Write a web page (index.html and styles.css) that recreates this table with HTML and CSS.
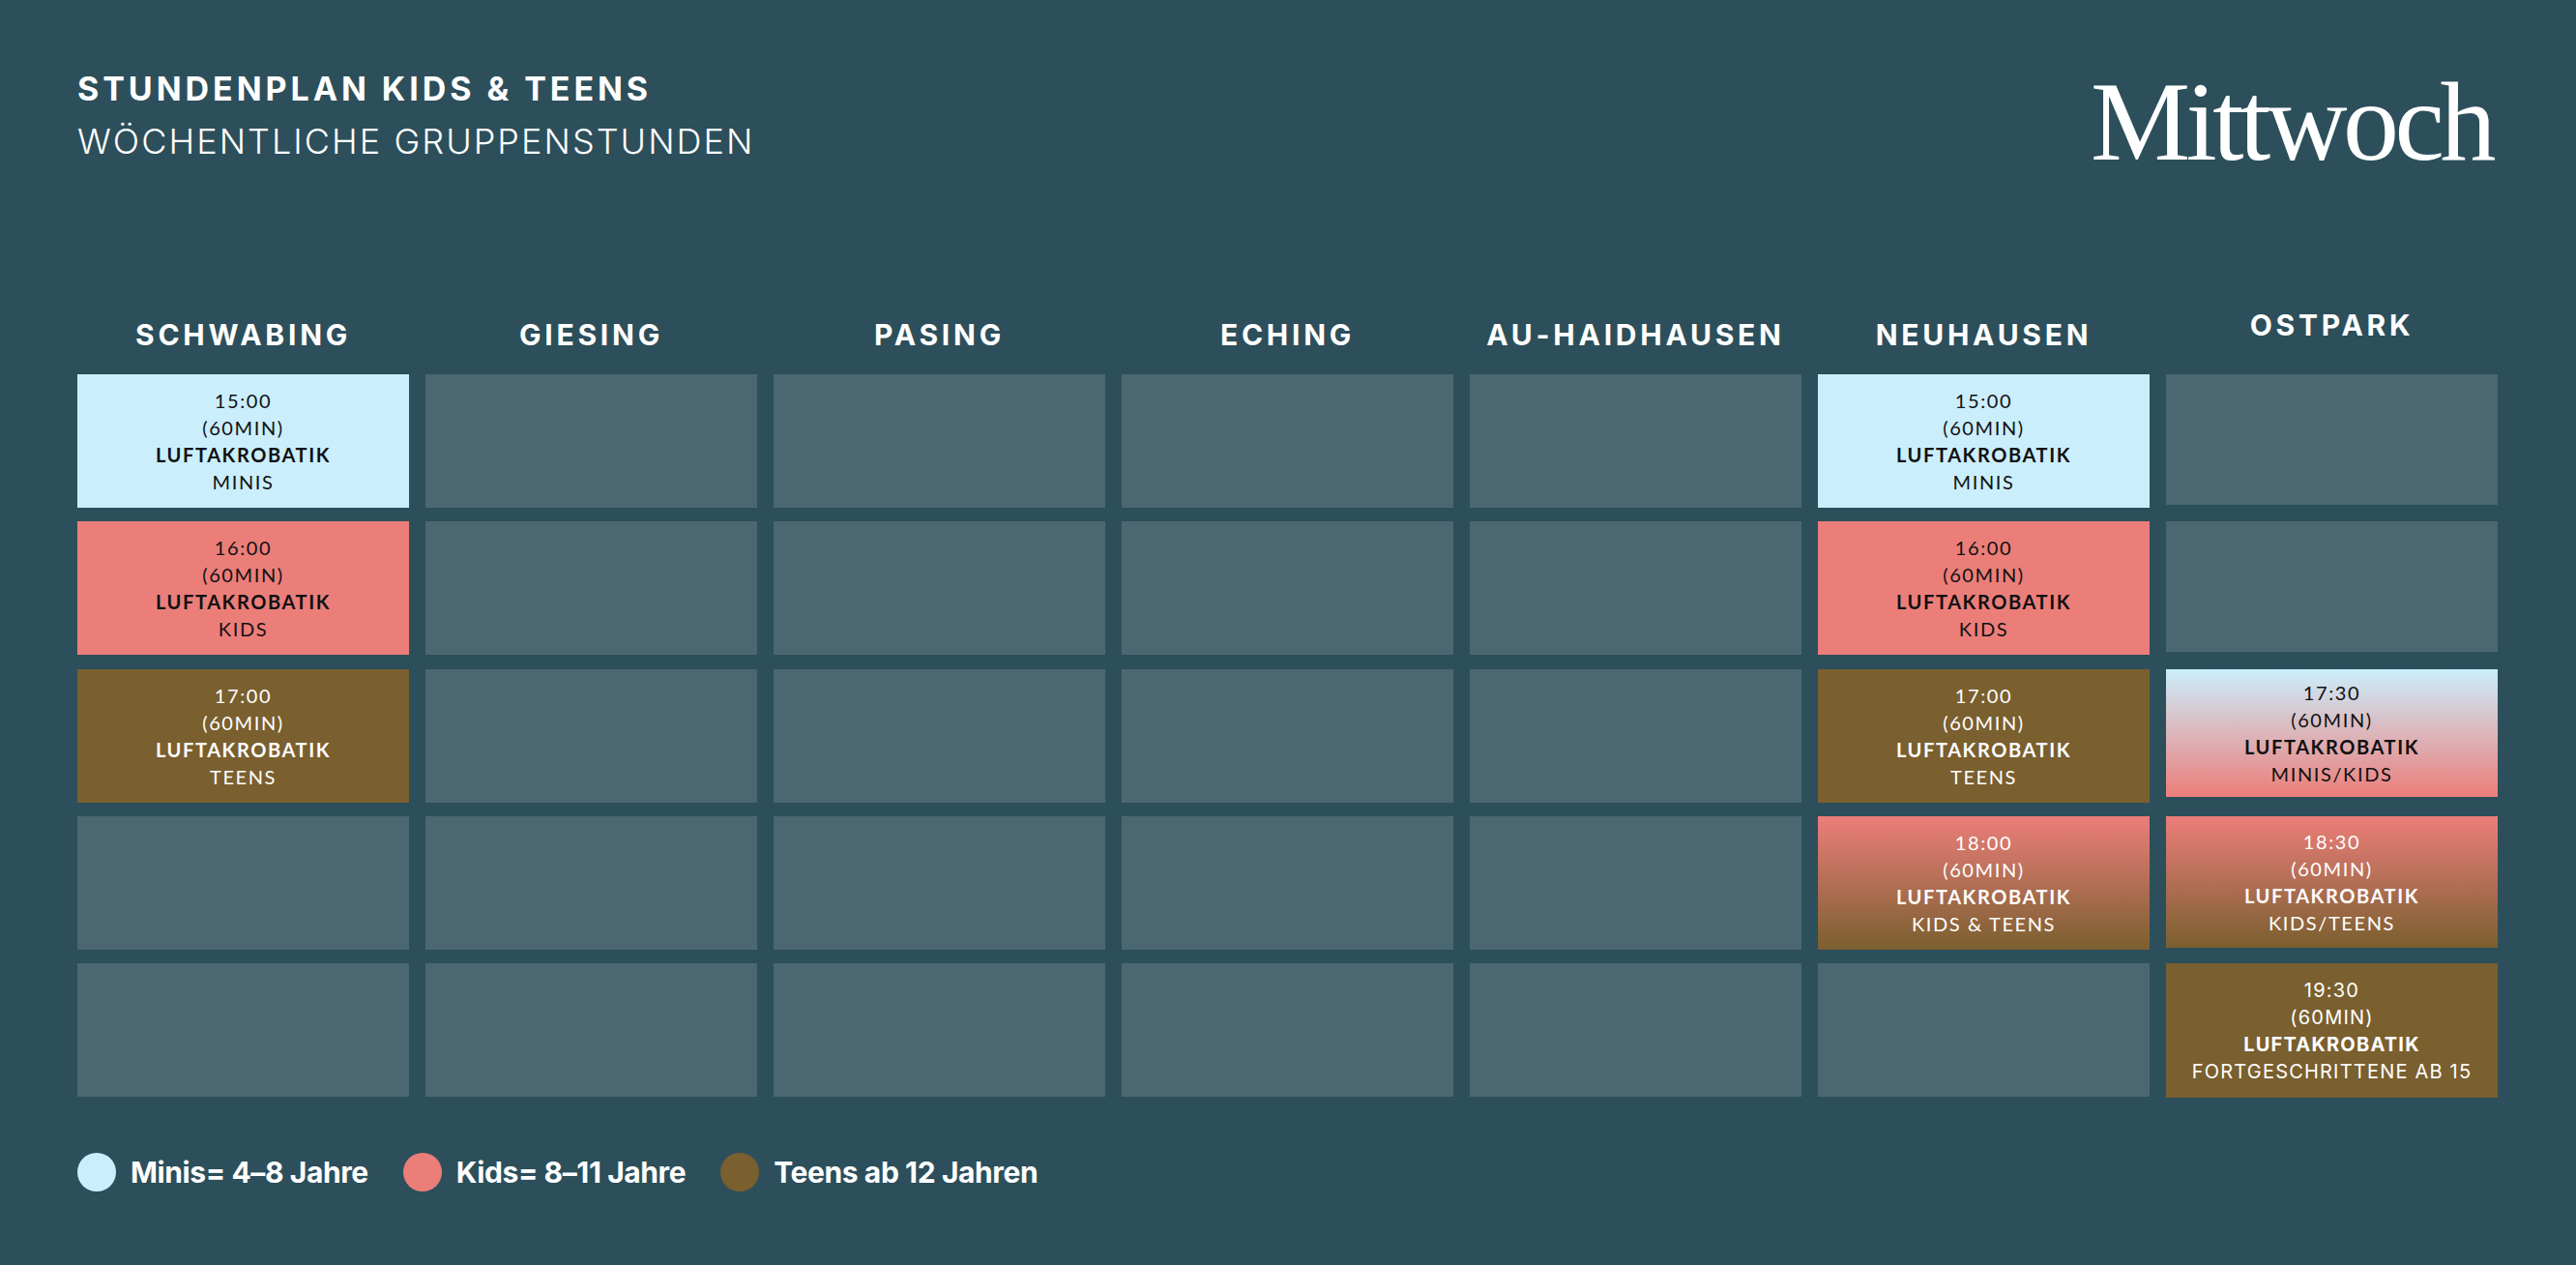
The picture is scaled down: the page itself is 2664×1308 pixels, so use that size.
FILE: index.html
```html
<!DOCTYPE html>
<html lang="de">
<head>
<meta charset="utf-8">
<title>Stundenplan Kids &amp; Teens – Mittwoch</title>
<link rel="stylesheet" href="styles.css">
</head>
<body>
<div class="page">
  <header class="top">
    <div class="titles">
      <h1 class="title">STUNDENPLAN KIDS &amp; TEENS</h1>
      <h2 class="subtitle">WÖCHENTLICHE GRUPPENSTUNDEN</h2>
    </div>
    <div class="logo">Mittwoch</div>
  </header>

  <main class="schedule">
    <section class="col">
      <h3 class="loc">SCHWABING</h3>
      <div class="cells">
        <div class="cell minis"><span>15:00</span><span>(60MIN)</span><b>LUFTAKROBATIK</b><span>MINIS</span></div>
        <div class="cell kids"><span>16:00</span><span>(60MIN)</span><b>LUFTAKROBATIK</b><span>KIDS</span></div>
        <div class="cell teens"><span>17:00</span><span>(60MIN)</span><b>LUFTAKROBATIK</b><span>TEENS</span></div>
        <div class="cell"></div>
        <div class="cell"></div>
      </div>
    </section>
    <section class="col">
      <h3 class="loc">GIESING</h3>
      <div class="cells">
        <div class="cell"></div><div class="cell"></div><div class="cell"></div><div class="cell"></div><div class="cell"></div>
      </div>
    </section>
    <section class="col">
      <h3 class="loc">PASING</h3>
      <div class="cells">
        <div class="cell"></div><div class="cell"></div><div class="cell"></div><div class="cell"></div><div class="cell"></div>
      </div>
    </section>
    <section class="col">
      <h3 class="loc">ECHING</h3>
      <div class="cells">
        <div class="cell"></div><div class="cell"></div><div class="cell"></div><div class="cell"></div><div class="cell"></div>
      </div>
    </section>
    <section class="col">
      <h3 class="loc">AU-HAIDHAUSEN</h3>
      <div class="cells">
        <div class="cell"></div><div class="cell"></div><div class="cell"></div><div class="cell"></div><div class="cell"></div>
      </div>
    </section>
    <section class="col">
      <h3 class="loc">NEUHAUSEN</h3>
      <div class="cells">
        <div class="cell minis"><span>15:00</span><span>(60MIN)</span><b>LUFTAKROBATIK</b><span>MINIS</span></div>
        <div class="cell kids"><span>16:00</span><span>(60MIN)</span><b>LUFTAKROBATIK</b><span>KIDS</span></div>
        <div class="cell teens"><span>17:00</span><span>(60MIN)</span><b>LUFTAKROBATIK</b><span>TEENS</span></div>
        <div class="cell kids-teens"><span>18:00</span><span>(60MIN)</span><b>LUFTAKROBATIK</b><span>KIDS &amp; TEENS</span></div>
        <div class="cell"></div>
      </div>
    </section>
    <section class="col col-ostpark">
      <h3 class="loc">OSTPARK</h3>
      <div class="cells">
        <div class="cell"></div>
        <div class="cell"></div>
        <div class="cell minis-kids"><span>17:30</span><span>(60MIN)</span><b>LUFTAKROBATIK</b><span>MINIS/KIDS</span></div>
        <div class="cell kids-teens"><span>18:30</span><span>(60MIN)</span><b>LUFTAKROBATIK</b><span>KIDS/TEENS</span></div>
        <div class="cell teens alt-font"><span>19:30</span><span>(60MIN)</span><b>LUFTAKROBATIK</b><span>FORTGESCHRITTENE AB 15</span></div>
      </div>
    </section>
  </main>

  <footer class="legend">
    <div class="legend-item"><i class="dot dot-minis"></i><span>Minis= 4–8 Jahre</span></div>
    <div class="legend-item"><i class="dot dot-kids"></i><span>Kids= 8–11 Jahre</span></div>
    <div class="legend-item"><i class="dot dot-teens"></i><span>Teens ab 12 Jahren</span></div>
  </footer>
</div>
</body>
</html>
```

FILE: styles.css
```css
html, body {
  margin: 0;
  padding: 0;
  background: #2c4f5b;
}

.page {
  width: 2664px;
  height: 1308px;
  box-sizing: border-box;
  padding: 72px 81px 0 80px;
  color: #ffffff;
  font-family: Inter, "Liberation Sans", sans-serif;
}

/* ---------- header ---------- */
.top {
  display: flex;
  justify-content: space-between;
  align-items: flex-start;
  height: 112px;
}

.title {
  margin: 0;
  font-size: 34px;
  line-height: 40px;
  font-weight: 700;
  letter-spacing: 0.116em;
}

.subtitle {
  margin: 12px 0 0;
  font-size: 36px;
  line-height: 44px;
  font-weight: 300;
  letter-spacing: 0.057em;
}

.logo {
  margin: -4px 6px 0 0;
  font-family: "Liberation Serif", "DejaVu Serif", serif;
  font-size: 116px;
  line-height: 116px;
  letter-spacing: -4.5px;
  color: #ffffff;
}

/* ---------- schedule ---------- */
.schedule {
  margin-top: 144px;
  display: grid;
  grid-template-columns: repeat(7, 343px);
  column-gap: 17px;
}

.col {
  display: flex;
  flex-direction: column;
}

.loc {
  margin: 0 0 23px;
  height: 36px;
  font-size: 30px;
  line-height: 36px;
  font-weight: 700;
  letter-spacing: 0.125em;
  text-align: center;
}

.col-ostpark .loc {
  margin-top: -10px;
  margin-bottom: 33px;
}

.cells {
  display: grid;
  grid-auto-rows: 138px;
  row-gap: 14.25px;
  align-items: start;
}

.cell {
  height: 138px;
  background: #4b6872;
  display: flex;
  flex-direction: column;
  align-items: center;
  justify-content: center;
  font-family: Lato, "Open Sans", sans-serif;
  font-size: 20px;
  line-height: 28px;
  letter-spacing: 0.08em;
  color: #111111;
}

.col-ostpark .cell { height: 135px; }
.col-ostpark .cell:nth-child(3) { height: 132px; }
.col-ostpark .cell:nth-child(4) { height: 136px; }
.col-ostpark .cell:nth-child(5) { height: 139px; }

.cell span,
.cell b {
  display: block;
}

.cell b {
  font-weight: 700;
}

.minis { background: #cbeefc; }
.kids { background: #ec7e7a; }
.teens { background: #7a5f2f; color: #ffffff; }

.minis-kids {
  background: linear-gradient(to bottom, #cbeefc 0%, #ec7e7a 100%);
}

.kids-teens {
  background: linear-gradient(to bottom, #ec7e7a 0%, #7a5f2f 100%);
  color: #ffffff;
}

.alt-font {
  font-family: Inter, "Liberation Sans", sans-serif;
  letter-spacing: 0.06em;
}

/* ---------- legend ---------- */
.legend {
  margin-top: 58px;
  display: flex;
  align-items: center;
  gap: 36px;
}

.legend-item {
  display: flex;
  align-items: center;
  gap: 15px;
  font-size: 30px;
  line-height: 40px;
  font-weight: 700;
  letter-spacing: -0.013em;
}

.dot {
  display: block;
  width: 40px;
  height: 40px;
  border-radius: 50%;
}

.dot-minis { background: #cbeefc; }
.dot-kids { background: #ec7e7a; }
.dot-teens { background: #7a5f2f; }
```
